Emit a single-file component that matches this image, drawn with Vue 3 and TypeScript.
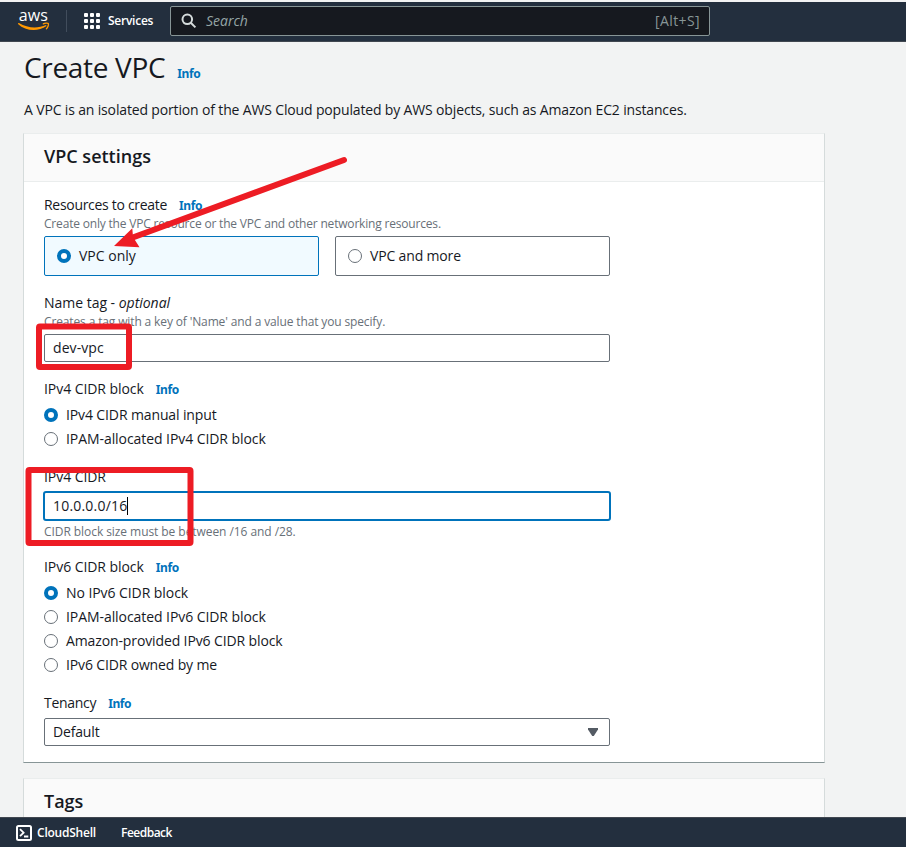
<script setup lang="ts">
import { ref } from 'vue'

interface Option {
  value: string
  label: string
  cls: string
}

const resources: Option[] = [
  { value: 'vpc', label: 'VPC only', cls: 'ls-vpc' },
  { value: 'more', label: 'VPC and more', cls: 'ls-tight' },
]
const ipv4Options: Option[] = [
  { value: 'manual', label: 'IPv4 CIDR manual input', cls: 'ls-manual' },
  { value: 'ipam', label: 'IPAM-allocated IPv4 CIDR block', cls: 'ls-ipam' },
]
const ipv6Options: Option[] = [
  { value: 'none', label: 'No IPv6 CIDR block', cls: 'ls-ipam' },
  { value: 'ipam', label: 'IPAM-allocated IPv6 CIDR block', cls: 'ls-ipam' },
  { value: 'amazon', label: 'Amazon-provided IPv6 CIDR block', cls: 'ls-manual' },
  { value: 'own', label: 'IPv6 CIDR owned by me', cls: 'ls-owned' },
]

const resource = ref('vpc')
const ipv4 = ref('manual')
const ipv6 = ref('none')
const dots = [0, 1, 2, 3, 4, 5, 6, 7, 8]
</script>

<template>
  <div class="page">
    <header class="topnav">
      <svg class="logo" width="34" height="34" viewBox="0 -6 34 34">
        <text class="logo-text" x="1.8" y="12.4" textLength="29" lengthAdjust="spacingAndGlyphs">aws</text>
        <path d="M1 14.300L2 14.100C10.500 19.300 20.500 20 29 16.100L29.600 17C20.500 23.200 8.500 22 1 14.900Z" fill="#f90" />
        <path d="M26.300 14.900C28 13.900 30.800 13.800 31.300 14.500C31.800 15.500 31 18.200 29.400 19.800" fill="none" stroke="#f90" stroke-width="1.300" stroke-linecap="round" />
      </svg>
      <span class="divider"></span>
      <span class="grid-icon"><i v-for="d in dots" :key="d"></i></span>
      <span class="services">Services</span>
      <div class="search">
        <svg width="16" height="16" viewBox="0 0 16 16" fill="none" stroke="#d5dbdb" stroke-width="2">
          <circle cx="6.3" cy="6.3" r="4.8" />
          <path d="M9.800 9.800L14.400 14.400" />
        </svg>
        <span class="placeholder">Search</span>
        <span class="hint">[Alt+S]</span>
      </div>
    </header>

    <main class="content">
      <h1>Create VPC <a class="info">Info</a></h1>
      <p class="intro">A VPC is an isolated portion of the AWS Cloud populated by AWS objects, such as Amazon EC2 instances.</p>

      <section class="card">
        <h2><span>VPC settings</span></h2>
        <div class="form">
          <div class="field resources">
            <div class="label"><span class="ls-resources">Resources to create</span><a class="info">Info</a></div>
            <div class="desc">Create only the VPC resource or the VPC and other networking resources.</div>
            <div class="tiles">
              <div v-for="o in resources" :key="o.value" class="tile" :class="{ on: resource === o.value }" @click="resource = o.value">
                <span class="radio" :class="{ on: resource === o.value }"></span><span :class="o.cls">{{ o.label }}</span>
              </div>
            </div>
          </div>

          <div class="field name">
            <div class="label"><span class="ls-optional">Name tag - <em>optional</em></span></div>
            <div class="desc ls-name">Creates a tag with a key of 'Name' and a value that you specify.</div>
            <div class="input"><span class="ls-dev">dev-vpc</span></div>
          </div>

          <div class="field ipv4">
            <div class="label"><span class="ls-block">IPv4 CIDR block</span><a class="info">Info</a></div>
            <div class="radios">
              <div v-for="o in ipv4Options" :key="o.value" class="option" @click="ipv4 = o.value">
                <span class="radio" :class="{ on: ipv4 === o.value }"></span><span :class="o.cls">{{ o.label }}</span>
              </div>
            </div>
          </div>

          <div class="field cidr">
            <div class="label"><span class="ls-block">IPv4 CIDR</span></div>
            <div class="input focused"><span class="ls-ip">10.0.0.0/16</span><i class="caret"></i></div>
            <div class="desc constraint">CIDR block size must be between /16 and /28.</div>
          </div>

          <div class="field ipv6">
            <div class="label"><span class="ls-block">IPv6 CIDR block</span><a class="info">Info</a></div>
            <div class="radios">
              <div v-for="o in ipv6Options" :key="o.value" class="option" @click="ipv6 = o.value">
                <span class="radio" :class="{ on: ipv6 === o.value }"></span><span :class="o.cls">{{ o.label }}</span>
              </div>
            </div>
          </div>

          <div class="field tenancy">
            <div class="label"><span class="ls-tenancy">Tenancy</span><a class="info">Info</a></div>
            <div class="input select">
              <span class="ls-tight">Default</span>
              <svg width="10" height="8" viewBox="0 0 10 8"><path d="M0 0H10V1.400L5.800 8H4.200L0 1.400Z" fill="#545b64" /></svg>
            </div>
          </div>
        </div>
      </section>

      <section class="card tags">
        <h2><span>Tags</span></h2>
      </section>
    </main>

    <footer class="bottombar">
      <svg width="16" height="16" viewBox="0 0 16 16" fill="none" stroke="#fff">
        <rect x="1" y="1" width="14" height="14" rx="1.5" stroke-width="2" />
        <path d="M4 4.200L7.600 7.700L4 11.200M8 11.500H12.300" stroke-width="1.800" />
      </svg>
      <span class="shell">CloudShell</span>
      <span class="feedback">Feedback</span>
    </footer>

    <svg class="markup" width="906" height="847" viewBox="0 0 906 847" fill="none" stroke="#ed1c24">
      <path d="M344 160L130 238.500" stroke-width="6" stroke-linecap="round" />
      <path d="M114 246L132.300 228.300L133 237L139.500 247.200Z" fill="#ed1c24" stroke="none" />
      <rect x="39" y="326.500" width="90" height="40.500" rx="1" stroke-width="6" />
      <rect x="28.500" y="470" width="162" height="73" rx="1" stroke-width="6" />
    </svg>
  </div>
</template>

<style>
body {
  margin: 0;
  overflow: hidden;
}
</style>

<style scoped>
.page {
  position: relative;
  display: flex;
  flex-direction: column;
  width: 906px;
  height: 847px;
  overflow: hidden;
  background: #f2f3f3;
  color: #16191f;
  font: 14px/22px "Open Sans", "Noto Sans", sans-serif;
  box-sizing: border-box;
}
.page * {
  box-sizing: border-box;
}
.topnav {
  display: flex;
  align-items: center;
  flex: none;
  height: 42px;
  padding-bottom: 1px;
  border-top: 2px solid #f2f3f3;
  border-bottom: 1px solid #414750;
  background: #232f3e;
  color: #fff;
}
.logo {
  margin-left: 17px;
  margin-top: -2px;
  overflow: visible;
}
.logo-text {
  font: 500 17px/20px "Open Sans", sans-serif;
  fill: #fff;
}
.divider {
  width: 1px;
  height: 22px;
  margin-left: 15px;
  background: #414d5c;
}
.grid-icon {
  display: grid;
  grid-template-columns: repeat(3, 4px);
  gap: 2px;
  margin-left: 17px;
}
.grid-icon i {
  height: 4px;
  background: #fff;
  border-radius: 1px;
}
.services {
  width: 62px;
  margin-left: 8px;
  font-size: 12px;
  font-weight: 600;
  letter-spacing: -0.25px;
}
.search {
  display: flex;
  align-items: center;
  width: 540px;
  height: 30px;
  padding: 0 9px 0 10px;
  border: 1px solid #879596;
  border-radius: 2px;
  background: #16191f;
}
.placeholder {
  margin-left: 9px;
  color: #95a5a6;
  font-style: italic;
}
.hint {
  margin-left: auto;
  color: #879596;
  letter-spacing: 0.4px;
}
.content {
  flex: 1;
  min-height: 0;
  padding: 7px 0 0 24px;
}
h1 {
  display: flex;
  align-items: baseline;
  gap: 12px;
  margin: 0;
  font-size: 28px;
  font-weight: 400;
  line-height: 36px;
  letter-spacing: -0.32px;
}
.info {
  color: #0073bb;
  font: 700 12px/22px "Noto Sans", sans-serif;
  letter-spacing: -0.4px;
}
.intro {
  margin: 14px 0 0;
  letter-spacing: -0.153px;
  white-space: nowrap;
}
.card {
  width: 802px;
  margin-top: 12px;
  margin-left: -1px;
  border: 1px solid #d5dbdb;
  border-top-color: #eaeded;
  border-bottom: 1px solid #879596;
  background: #fff;
}
h2 {
  display: flex;
  align-items: center;
  height: 48px;
  margin: 0;
  padding: 0 20px 4px;
  border-bottom: 1px solid #eaeded;
  background: #fafafa;
  font-size: 18px;
  font-weight: 600;
  line-height: 22px;
}
.form {
  height: 580px;
  padding: 12px 20px 0;
}
.label {
  display: flex;
  align-items: baseline;
  gap: 12px;
  height: 22px;
  white-space: nowrap;
}
.desc {
  height: 15px;
  color: #687078;
  font-size: 12px;
  line-height: 15px;
  letter-spacing: -0.184px;
  white-space: nowrap;
}
.tiles {
  display: flex;
  gap: 16px;
  margin-top: 5px;
}
.tile {
  display: flex;
  align-items: center;
  width: 275px;
  height: 40px;
  padding-left: 12px;
  border: 1px solid #687078;
  border-radius: 2px;
}
.tile.on {
  border-color: #0073bb;
  background: #f1faff;
}
.radio {
  flex: none;
  width: 14px;
  height: 14px;
  margin-right: 8px;
  border: 1px solid #687078;
  border-radius: 50%;
  background: #fff;
}
.radio.on {
  border: 4px solid #0073bb;
}
.name {
  margin-top: 16px;
}
.input {
  display: flex;
  align-items: center;
  width: 566px;
  height: 28px;
  margin-top: 5px;
  padding: 0 8px;
  border: 1px solid #687078;
  border-radius: 2px;
}
.ipv4 {
  margin-top: 16px;
}
.radios {
  padding-top: 3px;
}
.option {
  display: flex;
  align-items: center;
  height: 24px;
}
.cidr {
  margin-top: 15px;
}
.input.focused {
  width: 568px;
  height: 30px;
  margin: 3px 0 0 -1px;
  border: 2px solid #0073bb;
  border-radius: 3px;
}
.caret {
  width: 1px;
  height: 18px;
  background: #000;
}
.constraint {
  margin-top: 3px;
  letter-spacing: -0.065px;
}
.ipv6 {
  margin-top: 17px;
}
.tenancy {
  margin-top: 15px;
}
.select {
  justify-content: space-between;
  padding-right: 11px;
  margin-top: 4px;
}
.tags {
  margin-top: 15px;
}
.bottombar {
  display: flex;
  align-items: center;
  flex: none;
  position: relative;
  height: 30px;
  padding-left: 16px;
  border-top: 1px solid #414750;
  background: #232f3e;
  color: #fff;
  font-size: 12px;
  font-weight: 600;
}
.shell {
  margin-left: 5px;
  width: 84px;
  letter-spacing: -0.23px;
}
.feedback {
  letter-spacing: -0.5px;
}
.markup {
  position: absolute;
  top: 0;
  left: 0;
  pointer-events: none;
}
.ls-vpc { letter-spacing: 0; }
.ls-tight { letter-spacing: -0.16px; }
.ls-resources { letter-spacing: -0.3px; }
.ls-optional { letter-spacing: -0.02px; }
.ls-name { letter-spacing: -0.135px; }
.ls-dev { letter-spacing: 0.08px; }
.ls-block { letter-spacing: -0.06px; }
.ls-manual { letter-spacing: -0.12px; }
.ls-ipam { letter-spacing: -0.07px; }
.ls-owned { letter-spacing: -0.15px; }
.ls-ip { letter-spacing: 0.2px; }
.ls-tenancy { letter-spacing: -0.3px; }
</style>
